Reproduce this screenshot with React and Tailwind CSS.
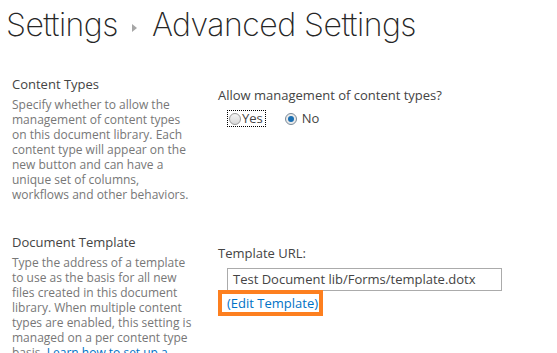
export default function App() {
  const font = { fontFamily: '"Open Sans", "Segoe UI", sans-serif' };
  const title = { fontFamily: 'Inter, Lato, sans-serif' };
  return (
    <div className="w-[557px] h-[353px] overflow-hidden bg-white" style={font}>
      <div className="flex items-center pl-[6px] pt-[2px] h-[48px] text-[32px] font-extralight tracking-[-0.5px] text-[#262626] leading-none" style={title}>
        <span>Settings</span>
        <svg width="6" height="8" viewBox="0 0 6 8" className="mx-[14px] mt-[6px]">
          <path d="M0 0 L5 4 L0 8 Z" fill="#a6a6a6" />
        </svg>
        <span>Advanced Settings</span>
      </div>

      <div className="flex pl-[12px] mt-[28px]">
        <div className="w-[190px] shrink-0">
          <div className="text-[13px] leading-[16px] text-[#444]">Content Types</div>
          <p className="mt-[5px] text-[12px] leading-[15px] text-[#777] whitespace-nowrap">
            Specify whether to allow the<br />
            management of content types<br />
            on this document library. Each<br />
            content type will appear on the<br />
            new button and can have a<br />
            unique set of columns,<br />
            workflows and other behaviors.
          </p>
        </div>
        <div className="pl-[16px] pt-[11px]">
          <div className="text-[13px] leading-[16px] text-[#444]">Allow management of content types?</div>
          <div className="flex items-center mt-[7px] pl-[9px] text-[13px] text-[#444]">
            <span className="flex items-center border border-dotted border-black h-[17px] pr-[2px]">
              <span className="w-[12px] h-[12px] rounded-full border border-[#9a9a9a] bg-gradient-to-b from-[#f4f4f4] to-[#d8d8d8] ml-[1px]" />
              <span className="ml-[1px] leading-none">Yes</span>
            </span>
            <span className="flex items-center ml-[19px]">
              <span className="w-[12px] h-[12px] rounded-full border border-[#7a8a99] bg-[#eaeaea] flex items-center justify-center">
                <span className="w-[6px] h-[6px] rounded-full bg-[#1a6fb3]" />
              </span>
              <span className="ml-[5px] leading-none">No</span>
            </span>
          </div>
        </div>
      </div>

      <div className="flex pl-[12px] mt-[32px]">
        <div className="w-[190px] shrink-0">
          <div className="text-[13px] leading-[16px] text-[#444]">Document Template</div>
          <p className="mt-[5px] text-[12px] leading-[15px] text-[#777] whitespace-nowrap">
            Type the address of a template<br />
            to use as the basis for all new<br />
            files created in this document<br />
            library. When multiple content<br />
            types are enabled, this setting is<br />
            managed on a per content type<br />
            basis. <span className="text-[#0072c6]">Learn how to set up a</span>
          </p>
        </div>
        <div className="pl-[16px] pt-[11px]">
          <div className="text-[13px] leading-[16px] text-[#444]">Template URL:</div>
          <div className="ml-[9px] mt-[7px] w-[275px] h-[23px] border border-[#ababab] flex items-center px-[5px] text-[13px] text-[#444] whitespace-nowrap">
            Test Document lib/Forms/template.dotx
          </div>
          <div className="w-[105px] h-[26px] border-[4px] border-[#fd7f1f] flex items-center pl-[5px] -mt-[1px]">
            <span className="text-[13px] text-[#0072c6] leading-none whitespace-nowrap">(Edit Template)</span>
          </div>
        </div>
      </div>
    </div>
  );
}
